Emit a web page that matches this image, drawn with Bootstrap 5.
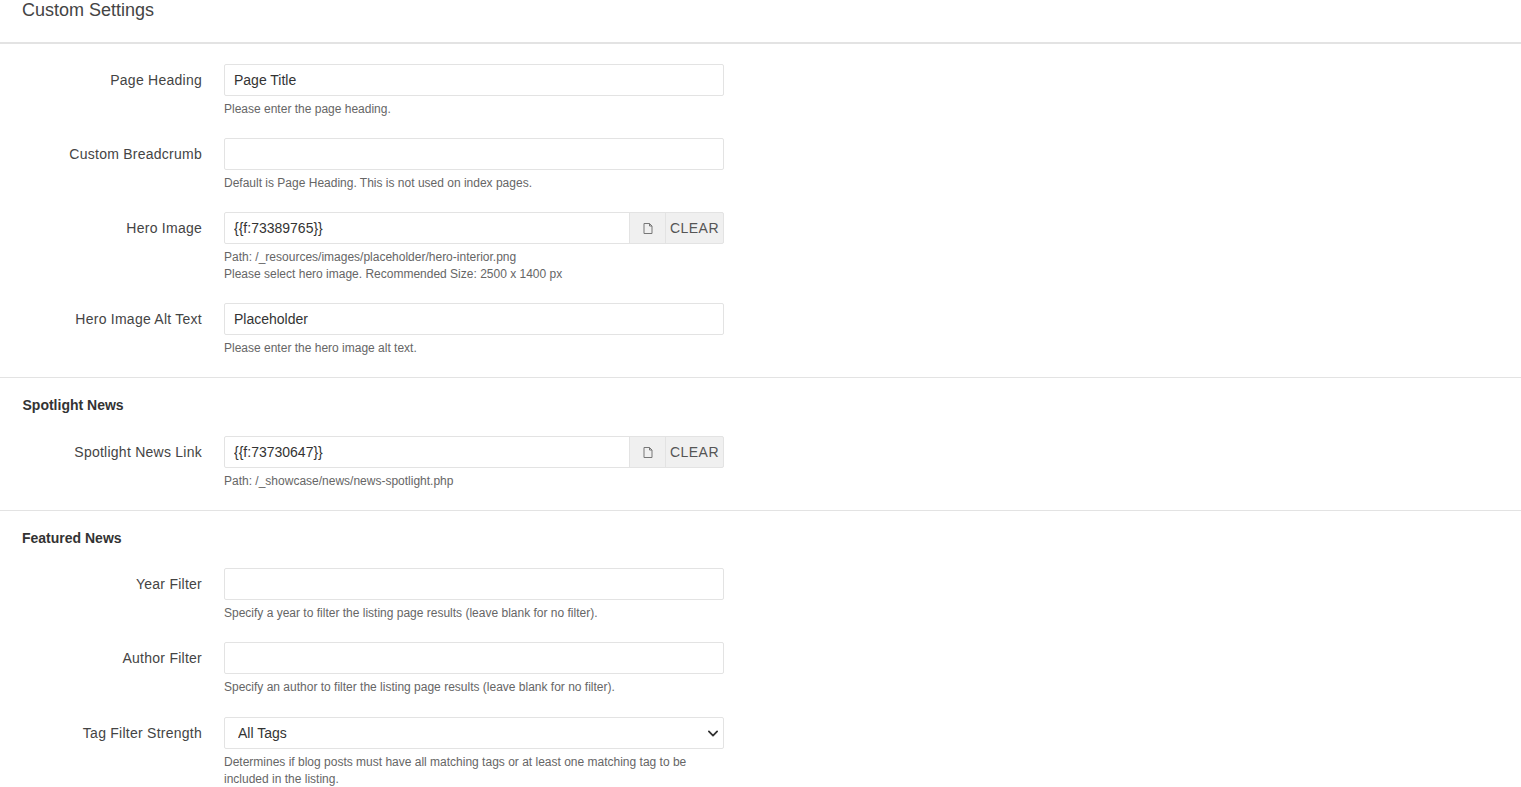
<!DOCTYPE html>
<html lang="en">
<head>
<meta charset="utf-8">
<title>Custom Settings</title>
<link href="https://cdn.jsdelivr.net/npm/bootstrap@5.3.0/dist/css/bootstrap.min.css" rel="stylesheet">
<style>
html,body{overflow:hidden;height:787px}
body{font-family:"Liberation Sans",Arial,sans-serif;font-size:14px;color:#333;background:#fff}
.page-head{height:44px;border-bottom:2px solid #e3e3e3;padding:0 22px}
.page-head h1{font-size:18px;line-height:21px;margin:0;font-weight:400;color:#444}
.form-wrap{padding-top:20px}
.set-row{display:flex;margin-bottom:20px}
.set-row-wide{margin-bottom:21px}
.set-label{width:202px;flex:none;text-align:right;line-height:32px;font-size:14px;letter-spacing:.25px;color:#444;margin:0}
.set-field{width:500px;flex:none;margin-left:22px}
.set-field .form-control,.set-field .form-select{height:32px;min-height:32px;border:1px solid #e3e3e3;border-radius:2px;font-size:14px;color:#333;padding:0 9px;box-shadow:none;line-height:30px}
.set-field .form-control.with-picker{flex:1 1 0;min-width:0;width:auto;border-radius:2px 0 0 2px}
.set-field .form-select{padding-left:13px;padding-right:30px;background-image:url("data:image/svg+xml,%3csvg xmlns='http://www.w3.org/2000/svg' viewBox='0 0 16 16'%3e%3cpath fill='none' stroke='%23333' stroke-linecap='round' stroke-linejoin='round' stroke-width='2.600' d='m2 5 6 6 6-6'/%3e%3c/svg%3e");background-position:right 3px center;background-size:14px 11px}
.set-help{font-size:12px;line-height:17px;color:#666;margin-top:5px}
.picker{background:#f0f0f0;border:1px solid #e3e3e3;color:#555;font-size:14px;height:32px;padding:0;display:flex;align-items:center;justify-content:center;flex:none}
.picker-file{width:37px;margin-left:-1px}
.picker-clear{width:59px;margin-left:-1px;letter-spacing:.45px;border-radius:0 2px 2px 0}
.sect{border-top:1px solid #e3e3e3;padding:18px 22px 0;height:59px;font-size:14px;font-weight:700;line-height:18px;color:#333}
.sect-short{height:58px}
.sect-inset{padding-left:22.500px}
</style>
</head>
<body>
<div class="page-head"><h1>Custom Settings</h1></div>
<form class="form-wrap">
  <div class="set-row">
    <label class="set-label">Page Heading</label>
    <div class="set-field"><input class="form-control" value="Page Title"><div class="set-help">Please enter the page heading.</div></div>
  </div>
  <div class="set-row">
    <label class="set-label">Custom Breadcrumb</label>
    <div class="set-field"><input class="form-control"><div class="set-help">Default is Page Heading. This is not used on index pages.</div></div>
  </div>
  <div class="set-row">
    <label class="set-label">Hero Image</label>
    <div class="set-field">
      <div class="d-flex"><input class="form-control with-picker" value="{{f:73389765}}">
        <span class="picker picker-file"><svg width="10" height="11" viewBox="0 0 10 11" fill="none" stroke="#777" stroke-width="1"><path d="M1 .5h5.500L9 3v7.500H1zM6.500.5V3H9"/></svg></span>
        <span class="picker picker-clear">CLEAR</span></div>
      <div class="set-help">Path: /_resources/images/placeholder/hero-interior.png<br>Please select hero image. Recommended Size: 2500 x 1400 px</div>
    </div>
  </div>
  <div class="set-row">
    <label class="set-label">Hero Image Alt Text</label>
    <div class="set-field"><input class="form-control" value="Placeholder"><div class="set-help">Please enter the hero image alt text.</div></div>
  </div>
  <div class="sect sect-inset">Spotlight News</div>
  <div class="set-row">
    <label class="set-label">Spotlight News Link</label>
    <div class="set-field">
      <div class="d-flex"><input class="form-control with-picker" value="{{f:73730647}}">
        <span class="picker picker-file"><svg width="10" height="11" viewBox="0 0 10 11" fill="none" stroke="#777" stroke-width="1"><path d="M1 .5h5.500L9 3v7.500H1zM6.500.5V3H9"/></svg></span>
        <span class="picker picker-clear">CLEAR</span></div>
      <div class="set-help">Path: /_showcase/news/news-spotlight.php</div>
    </div>
  </div>
  <div class="sect sect-short">Featured News</div>
  <div class="set-row">
    <label class="set-label">Year Filter</label>
    <div class="set-field"><input class="form-control"><div class="set-help">Specify a year to filter the listing page results (leave blank for no filter).</div></div>
  </div>
  <div class="set-row set-row-wide">
    <label class="set-label">Author Filter</label>
    <div class="set-field"><input class="form-control"><div class="set-help">Specify an author to filter the listing page results (leave blank for no filter).</div></div>
  </div>
  <div class="set-row">
    <label class="set-label">Tag Filter Strength</label>
    <div class="set-field"><select class="form-select"><option>All Tags</option></select><div class="set-help">Determines if blog posts must have all matching tags or at least one matching tag to be included in the listing.</div></div>
  </div>
</form>
<script src="https://cdn.jsdelivr.net/npm/bootstrap@5.3.0/dist/js/bootstrap.bundle.min.js"></script>
</body>
</html>
